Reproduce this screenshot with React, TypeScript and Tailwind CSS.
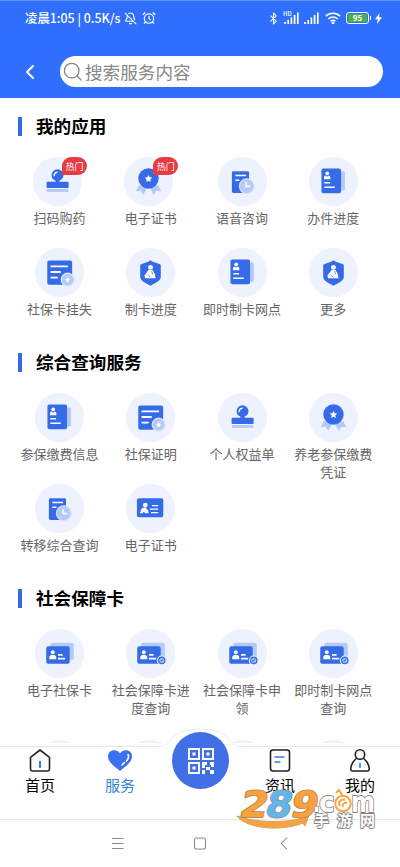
import type { ReactNode } from "react";
import { AlarmClock, BellOff, Bluetooth, ChevronLeft } from "lucide-react";

type IconName =
  | "stamp"
  | "medal"
  | "docClock"
  | "docCard"
  | "form"
  | "shield"
  | "idCard"
  | "cards"
  | "cardsBadge";

type Service = {
  label: string;
  icon: IconName;
  hot?: boolean;
};

const BLUE = "#366be8";
const LIGHT = "#b3c9f8";
const STAR =
  "M0 -3.6 L1.1 -1.3 L3.6 -1 L1.8 .8 L2.2 3.3 L0 2.1 L-2.2 3.3 L-1.8 .8 L-3.6 -1 L-1.1 -1.3Z";

const CardPair = () => (
  <>
    <rect x="15" y="13.5" width="23" height="17" rx="2" fill={LIGHT} />
    <rect x="11" y="17" width="23" height="17" rx="2" fill={BLUE} />
    <circle cx="17.4" cy="22.7" r="1.9" fill="#fff" />
    <path d="M14 29.6v-1.7c0-1.6 1.3-2.6 3.4-2.6s3.4 1 3.4 2.6v1.7z" fill="#fff" />
    <path d="M22.5 25.4h4.5M22.5 29h7" stroke="#fff" strokeWidth="1.6" />
  </>
);

const icons: Record<IconName, ReactNode> = {
  stamp: (
    <>
      <circle cx="24" cy="17.8" r="5.8" fill={BLUE} />
      <path d="M22 21h4v4h-4z" fill={BLUE} />
      <rect x="13.3" y="24.2" width="21.6" height="6.2" rx="1" fill={BLUE} />
      <rect x="13.6" y="31.4" width="21" height="2.8" fill={LIGHT} />
      <path d="M20.7 18.3a3.5 3.5 0 0 1 3-3.5" stroke="#fff" strokeWidth="1.2" fill="none" strokeLinecap="round" />
    </>
  ),
  medal: (
    <>
      <path d="M14.5 27.5l-3 6 4.8-.4 2.6 4 3.6-6.5z" fill={LIGHT} />
      <path d="M33.5 27.5l3 6-4.8-.4-2.6 4-3.6-6.5z" fill={LIGHT} />
      <circle cx="24" cy="21.1" r="10" fill={BLUE} />
      <path d={STAR} transform="translate(24 21.2)" fill="#fff" />
    </>
  ),
  docClock: (
    <>
      <rect x="13.6" y="14" width="16.8" height="21.3" rx="1.4" fill={BLUE} />
      <path d="M17 18.2h10.5M17 22.7h4" stroke="#fff" strokeWidth="1.4" />
      <circle cx="28.2" cy="28.6" r="7.3" fill="#b5caf8" stroke="#dce6fc" strokeWidth="1" />
      <path d="M27.6 24.5v4.3h4" stroke="#fff" strokeWidth="1.5" fill="none" />
    </>
  ),
  docCard: (
    <>
      <rect x="28" y="14.3" width="7.2" height="18.6" rx="1" fill={LIGHT} />
      <rect x="12.2" y="11.2" width="19.2" height="24.2" rx="1.8" fill={BLUE} />
      <circle cx="17.8" cy="16" r="1.8" fill="#fff" />
      <path d="M14.7 21.8v-2c0-1 .8-1.6 1.8-1.8l1.3 1.3 1.3-1.3c1 .2 1.8.8 1.8 1.8v2z" fill="#fff" />
      <path d="M15 25.2h5.6M15 29.6h10.3" stroke="#fff" strokeWidth="1.5" />
    </>
  ),
  form: (
    <>
      <rect x="12" y="12.2" width="24.4" height="23.8" rx="2" fill={BLUE} />
      <path d="M16 18h15.5M16 23.5h8.5M16 29h5.5" stroke="#fff" strokeWidth="1.9" strokeLinecap="round" />
      <circle cx="32" cy="31" r="6.3" fill="#b5caf8" stroke="#dce6fc" strokeWidth="1.2" />
      <path d={STAR} transform="translate(32 31) scale(.75)" fill="#fff" />
    </>
  ),
  shield: (
    <>
      <path d="M24 12l1.8 1.2 7.5 2.8q.8.3.8 1.2v11.3c0 3.6-5.3 6.2-10.1 8.5-4.8-2.3-10.1-4.9-10.1-8.5V17.2q0-.9.8-1.2l7.5-2.8z" fill={BLUE} />
      <circle cx="24" cy="19" r="2.4" fill="#fff" />
      <path d="M22 21.6h4l2 3.4 1 4.6H18.800l-.8-2.500z" fill="#fff" />
      <path d="M21.500 26l2 2.600M25 22.500l1.300 3.500" stroke={BLUE} strokeWidth=".7" />
    </>
  ),
  idCard: (
    <>
      <rect x="10.7" y="14" width="25.8" height="18.5" rx="1.8" fill={BLUE} />
      <circle cx="18.9" cy="20.6" r="2.3" fill="#fff" />
      <path d="M13.5 28.6l2-4.8 3.3-1 2.9 3 .4 2.8h-3l-2-1.5-.8 1.5z" fill="#fff" />
      <path d="M25.5 21.2h6M23.5 24.6h8M24.5 28h7" stroke="#fff" strokeWidth="1.2" />
    </>
  ),
  cards: <CardPair />,
  cardsBadge: (
    <>
      <CardPair />
      <circle cx="35" cy="30.8" r="4.8" fill="#edf2fe" />
      <circle cx="35" cy="30.8" r="3.1" fill="#a9c3f8" stroke={BLUE} strokeWidth="1.3" />
      <path d="M33.9 32l2-2.3" stroke={BLUE} strokeWidth="1.2" />
    </>
  ),
};

const sections: { title: string; rows: string; items: Service[] }[] = [
  {
    title: "我的应用",
    rows: "auto-rows-[91px]",
    items: [
      { label: "扫码购药", icon: "stamp", hot: true },
      { label: "电子证书", icon: "medal", hot: true },
      { label: "语音咨询", icon: "docClock" },
      { label: "办件进度", icon: "docCard" },
      { label: "社保卡挂失", icon: "form" },
      { label: "制卡进度", icon: "shield" },
      { label: "即时制卡网点", icon: "docCard" },
      { label: "更多", icon: "shield" },
    ],
  },
  {
    title: "综合查询服务",
    rows: "auto-rows-[91px]",
    items: [
      { label: "参保缴费信息", icon: "docCard" },
      { label: "社保证明", icon: "form" },
      { label: "个人权益单", icon: "stamp" },
      { label: "养老参保缴费凭证", icon: "medal" },
      { label: "转移综合查询", icon: "docClock" },
      { label: "电子证书", icon: "idCard" },
    ],
  },
  {
    title: "社会保障卡",
    rows: "auto-rows-[111px]",
    items: [
      { label: "电子社保卡", icon: "cards" },
      { label: "社会保障卡进度查询", icon: "cardsBadge" },
      { label: "社会保障卡申领", icon: "cardsBadge" },
      { label: "即时制卡网点查询", icon: "cardsBadge" },
      { label: "", icon: "cards" },
      { label: "", icon: "cards" },
      { label: "", icon: "cards" },
      { label: "", icon: "cards" },
    ],
  },
];

const ServiceItem = ({ label, icon, hot }: Service) => (
  <div className="flex flex-col items-center">
    <div className={hot ? "relative -left-0.5" : "relative"}>
      <div className="size-[49px] rounded-full bg-[#eef2fe]">
        <svg viewBox="0 0 48 48" className="size-full">
          {icons[icon]}
        </svg>
      </div>
      {hot && (
        <span className="absolute left-[29px] top-0 flex h-[18px] w-[25px] items-center justify-center rounded-full rounded-bl-none bg-[#e63c41] text-[9px] leading-none text-white">
          热门
        </span>
      )}
    </div>
    <p className="mt-[3px] w-20 text-center text-[13px] leading-[18px] text-[#666]">
      {label}
    </p>
  </div>
);

const Signal = () => (
  <svg viewBox="0 0 15 12" className="h-3 w-[15px]" stroke="#fff" strokeWidth="1.7">
    <path d="M1 12v-2M4.200 12V8M7.400 12V5.500M10.600 12V3M13.800 12V.500" />
  </svg>
);

const StatusBar = () => (
  <div className="flex h-[34px] items-center pl-[25px] pr-[18px] text-white">
    <span className="whitespace-nowrap text-[12.4px] font-medium">
      凌晨1:05 | 0.5K/s
    </span>
    <BellOff size={13} strokeWidth={2} className="ml-[3px]" />
    <AlarmClock size={14} strokeWidth={2} className="ml-[5px]" />
    <div className="ml-auto flex items-center">
      <Bluetooth size={13} strokeWidth={2} />
      <div className="relative ml-[4px]">
        <span className="absolute -left-[1px] -top-[1px] text-[6px] font-medium leading-none">
          HD
        </span>
        <Signal />
      </div>
      <div className="ml-[5px]">
        <Signal />
      </div>
      <svg viewBox="0 0 16 12" className="ml-[6px] h-3 w-4" fill="none" stroke="#fff" strokeWidth="1.5">
        <path d="M.8 4.3a10.3 10.3 0 0 1 14.4 0M3.3 7a6.8 6.8 0 0 1 9.4 0M5.6 9.3a3.5 3.5 0 0 1 4.8 0" />
        <circle cx="8" cy="11" r=".7" fill="#fff" />
      </svg>
      <div className="ml-[5px] flex h-[12px] w-[23px] items-center justify-center rounded-[3px] border border-white p-px">
        <span className="flex h-full w-full items-center justify-center rounded-[1px] bg-[#4caf50] text-[8px] font-bold leading-none">
          95
        </span>
      </div>
      <span className="ml-px h-1 w-px bg-white" />
      <svg viewBox="0 0 7 11" className="ml-[4px] h-[11px] w-[7px]" fill="#fff">
        <path d="M4.7 0L0 6.3h2.8L2 11l5-6.7H4z" />
      </svg>
    </div>
  </div>
);

const Tab = ({ label, active, children }: { label: string; active?: boolean; children: ReactNode }) => (
  <div className="flex w-20 flex-col items-center pt-px">
    <svg viewBox="0 0 26 26" className="size-[26px]" fill="none" stroke="#222" strokeWidth="1.6" strokeLinejoin="round">
      {children}
    </svg>
    <span className={active ? "mt-px text-[15px] leading-5 text-[#3088dd]" : "mt-px text-[15px] leading-5 text-black"}>
      {label}
    </span>
  </div>
);

const QrIcon = () => (
  <svg viewBox="0 0 26 26" className="size-[26px]" fill="none" stroke="#fff" strokeWidth="2">
    <rect x="1" y="1" width="10" height="10" />
    <rect x="15" y="1" width="10" height="10" />
    <rect x="1" y="15" width="10" height="10" />
    <path d="M4.500 6h3M18.500 6h3M4.500 20h3" strokeWidth="3" />
    <path
      d="M14 14h5v3h-2v3h-3zM22 14h4v5h-3v-2h-1zM18 19h4v3h-4zM14 22h3v4h-3zM22 22h4v4h-4z"
      fill="#fff"
      stroke="none"
    />
  </svg>
);

const Watermark = () => (
  <svg
    viewBox="0 0 140 42"
    className="absolute left-[236px] top-[42px] h-[42px] w-[140px] overflow-visible"
    fontFamily="'DejaVu Sans', sans-serif"
    fontWeight="700"
    stroke="#8d8279"
    paintOrder="stroke"
    strokeLinejoin="round"
  >
    <path d="M1 27C18 34 52 34 67 29l-2-2 8-1-4 11-2-3C48 42 12 41 1 27z" fill="#f9a13c" strokeWidth=".8" />
    <g transform="skewX(-12)" fontSize="36" strokeWidth="1.8">
      <text x="8" y="28" textLength="28" lengthAdjust="spacingAndGlyphs" fill="#f9a13c" stroke="#b58a58">2</text>
      <text x="59" y="28" textLength="27" lengthAdjust="spacingAndGlyphs" fill="#f9a13c" stroke="#b58a58">9</text>
      <text x="34" y="28" textLength="26" lengthAdjust="spacingAndGlyphs" fill="#62b5e8" stroke="#8d9aa3">8</text>
    </g>
    <g fontSize="29" strokeWidth="1.8" fill="#fff">
      <text x="77" y="22.5" textLength="7" lengthAdjust="spacingAndGlyphs">.</text>
      <text x="83" y="22.5" textLength="16" lengthAdjust="spacingAndGlyphs">c</text>
      <text x="115" y="22.5" textLength="24" lengthAdjust="spacingAndGlyphs">m</text>
    </g>
    <circle cx="107" cy="14.500" r="6.700" fill="#fff" stroke="#f9a13c" strokeWidth="4" />
    <path d="M104 17a4 4 0 0 1 5-6M107 18a3 3 0 0 1 4-4M100 4l3-3 3 5" fill="none" stroke="#f9a13c" strokeWidth="2" />
    <text
      x="78"
      y="37"
      textLength="61"
      fontSize="15"
      fill="#fff"
      stroke="#858585"
      strokeWidth="1.8"
      fontFamily="'Noto Sans CJK SC', sans-serif"
    >
      手游网
    </text>
  </svg>
);

const App = () => {
  return (
    <div className="flex h-[867px] w-[400px] flex-col overflow-hidden bg-[#fefefe] font-['Noto_Sans_CJK_SC',sans-serif]">
      {/* Header */}
      <header className="h-[98px] shrink-0 border-t border-[#5f93fd] bg-[#306ffe]">
        <StatusBar />
        <div className="mt-[21px] flex items-center pl-[18px] pr-[17px]">
          <ChevronLeft size={24} strokeWidth={2} className="text-white" />
          <div className="ml-[18px] flex h-[31px] flex-1 items-center rounded-full bg-white pl-[3px]">
            <svg viewBox="0 0 20 20" className="size-5" fill="none" stroke="#888" strokeWidth="1.3">
              <circle cx="8.7" cy="8.7" r="7.3" />
              <path d="M14 14l4 4" strokeLinecap="round" />
            </svg>
            <span className="ml-[2px] text-[17.6px] leading-none text-[#888]">
              搜索服务内容
            </span>
          </div>
        </div>
      </header>

      {/* Services */}
      <main className="mb-[3px] h-[645px] shrink-0 overflow-hidden">
        {sections.map((section) => (
          <section key={section.title} className="pt-[18px]">
            <div className="mb-[21px] flex h-5 items-center pl-[18px]">
              <span className="h-[19px] w-1 bg-[#366be8]" />
              <h2 className="ml-[14px] text-[17.6px] font-bold leading-5 text-black">
                {section.title}
              </h2>
            </div>
            <div className={`mx-[14px] -mb-[5px] grid grid-cols-4 pr-[7px] ${section.rows}`}>
              {section.items.map((item, i) => (
                <ServiceItem key={i} {...item} />
              ))}
            </div>
          </section>
        ))}
      </main>

      {/* Tab bar */}
      <nav className="relative flex h-[73px] shrink-0 border-t border-[#e6e8ec] bg-white">
        <Tab label="首页">
          <path d="M3.500 9.300L13 2l9.500 7.300V21a2 2 0 0 1-2 2h-15a2 2 0 0 1-2-2z" />
          <path d="M13 13v7" stroke="#3b78e8" strokeWidth="2" />
        </Tab>
        <Tab label="服务" active>
          <path
            d="M13 23C8 18.500 1 14.500 1 8.200 1 1.800 9 0 13 5.200 17 0 25 1.800 25 8.200 25 14.500 18 18.500 13 23z"
            fill="#3a70f2"
            stroke="none"
          />
          <path d="M21 6.500c1.500 3 0 5-1.500 6.500M17.500 14.500l-2.500 2.500" stroke="#fff" strokeLinecap="round" />
        </Tab>
        <div className="w-20" />
        <Tab label="资讯">
          <rect x="3.500" y="2" width="19" height="21" rx="2.500" />
          <path d="M7.500 9h10M7.500 14h6" stroke="#3b78e8" />
        </Tab>
        <Tab label="我的">
          <circle cx="13" cy="6.500" r="4.700" />
          <path d="M9.300 10.500c-3 2.500-5 5.500-5.500 9.500-.200 2 .500 3 2 3h14.400c1.500 0 2.200-1 2-3-.500-4-2.500-7-5.500-9.500" />
          <path d="M13 15v5" stroke="#3b78e8" />
        </Tab>
        <svg viewBox="0 0 84 24" className="absolute -top-[21px] left-[158px] h-6 w-[84px]" fill="#fff">
          <path d="M0 20.500c8 0 10-3 14-8C22 0 62 0 70 12.500c4 5 6 8 14 8V24H0z" stroke="none" />
          <path d="M0 20.500c8 0 10-3 14-8C22 0 62 0 70 12.500c4 5 6 8 14 8" fill="none" stroke="#eceef2" />
        </svg>
        <div className="absolute -top-[15px] left-[172px] flex size-[57px] items-center justify-center rounded-full bg-[#416fe6]">
          <QrIcon />
        </div>
        <Watermark />
      </nav>

      {/* System navigation */}
      <footer className="flex h-12 shrink-0 items-center border-t border-[#e8e8e8] bg-[#fefefe]">
        <svg viewBox="0 0 400 47" className="h-[47px] w-[400px]" fill="none" stroke="#8c8c8c" strokeWidth="1.1">
          <path d="M112 18.500h11.500M112 23.500h11.500M112 28.500h11.500" />
          <rect x="194.500" y="18" width="11" height="11" rx="2" />
          <path d="M287 17.500l-5.500 6 5.500 6" />
        </svg>
      </footer>
    </div>
  );
};

export default App;
